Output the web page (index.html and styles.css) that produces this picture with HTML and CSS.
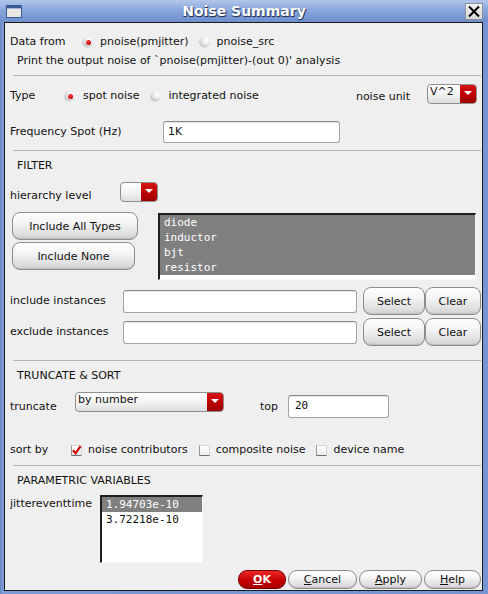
FILE: index.html
```html
<!DOCTYPE html>
<html>
<head>
<meta charset="utf-8">
<title>Noise Summary</title>
<link rel="stylesheet" href="styles.css">
</head>
<body>
<div class="win">
  <div class="titlebar">
    <svg class="winicon" width="16" height="13" viewBox="0 0 16 13"><rect x="0.5" y="0.5" width="15" height="12" fill="#e9e9e1" stroke="#3b5a93"/><rect x="0" y="0" width="16" height="3" fill="#3b5a93"/><rect x="1" y="3" width="14" height="1" fill="#9fb4d9"/></svg>
    <span class="title">Noise Summary</span>
    <span class="closebtn"><svg width="14" height="13" viewBox="0 0 14 13"><path d="M2 1.5 L12 11.5 M12 1.5 L2 11.5" stroke="#000" stroke-width="2"/></svg></span>
  </div>
  <div class="content">
    <section class="sec s1">
      <div class="row r-data">
        <span class="lbl w-data">Data from</span>
        <span class="radio on"></span><span class="opt">pnoise(pmjitter)</span>
        <span class="radio"></span><span class="opt">pnoise_src</span>
      </div>
      <div class="note">Print the output noise of `pnoise(pmjitter)-(out 0)' analysis</div>
    </section>
    <hr class="sep">
    <section class="sec s2">
      <div class="row r-type">
        <span class="lbl w-type mt5">Type</span>
        <span class="radio on mt7"></span><span class="opt mt5">spot noise</span>
        <span class="radio mt7"></span><span class="opt mt5">integrated noise</span>
        <span class="lbl unit mt6">noise unit</span>
        <span class="combo c-unit"><span class="val">V^2</span><span class="arrow"></span></span>
      </div>
      <div class="row r-freq">
        <span class="lbl w-freq">Frequency Spot (Hz)</span>
        <span class="input i-freq">1K</span>
      </div>
    </section>
    <hr class="sep">
    <section class="sec s3">
      <div class="head">FILTER</div>
      <div class="row r-hier">
        <span class="lbl w-hier mt7">hierarchy level</span>
        <span class="combo c-hier"><span class="val"></span><span class="arrow"></span></span>
      </div>
      <div class="r-body">
        <div class="btncol">
          <span class="btn b-all">Include All Types</span>
          <span class="btn b-none">Include None</span>
        </div>
        <div class="list l-types">
          <div class="item sel">diode</div>
          <div class="item sel">inductor</div>
          <div class="item sel">bjt</div>
          <div class="item sel">resistor</div>
        </div>
      </div>
      <div class="row r-inst">
        <span class="lbl w-inst">include instances</span>
        <span class="input i-inst"></span>
        <span class="btn b-sel">Select</span>
        <span class="btn b-clr">Clear</span>
      </div>
      <div class="row r-inst r-excl">
        <span class="lbl w-inst">exclude instances</span>
        <span class="input i-inst"></span>
        <span class="btn b-sel">Select</span>
        <span class="btn b-clr">Clear</span>
      </div>
    </section>
    <hr class="sep">
    <section class="sec s4">
      <div class="head">TRUNCATE &amp; SORT</div>
      <div class="row r-trunc">
        <span class="lbl w-trunc mt8">truncate</span>
        <span class="combo c-trunc"><span class="val">by number</span><span class="arrow"></span></span>
        <span class="lbl w-top mt8">top</span>
        <span class="input i-top mono">20</span>
      </div>
      <div class="row r-sort">
        <span class="lbl w-sort">sort by</span>
        <span class="check on"><svg width="11" height="11" viewBox="0 0 11 11"><path d="M2 5.2 L4.6 8.3 L9.6 1.2" fill="none" stroke="#d40000" stroke-width="2.2"/></svg></span><span class="opt">noise contributors</span>
        <span class="check"></span><span class="opt">composite noise</span>
        <span class="check"></span><span class="opt">device name</span>
      </div>
    </section>
    <hr class="sep">
    <section class="sec s5">
      <div class="head">PARAMETRIC VARIABLES</div>
      <div class="row r-param">
        <span class="lbl w-param mt2">jittereventtime</span>
        <div class="list l-param">
          <div class="item sel">1.94703e-10</div>
          <div class="item">3.72218e-10</div>
        </div>
      </div>
      <div class="r-actions">
        <span class="btn act ok"><u>O</u>K</span>
        <span class="btn act cancel"><u>C</u>ancel</span>
        <span class="btn act apply"><u>A</u>pply</span>
        <span class="btn act help"><u>H</u>elp</span>
      </div>
    </section>
  </div>
</div>
</body>
</html>
```

FILE: styles.css
```css
* { box-sizing: border-box; }
html, body { margin: 0; padding: 0; }
body {
  width: 488px;
  height: 594px;
  overflow: hidden;
  font-family: "DejaVu Sans", sans-serif;
  font-size: 11px;
  color: #111;
}
.win {
  width: 488px;
  height: 594px;
  display: flex;
  flex-direction: column;
  background: linear-gradient(to right, #5f82c4, #7c9ad4 2px, #7596d2);
}
.titlebar {
  height: 22px;
  flex: none;
  display: flex;
  align-items: center;
  position: relative;
  background: linear-gradient(to bottom, #b1c6ea, #8aa7dc 45%, #6d8fce);
}
.winicon { margin-left: 6px; margin-top: 1px; }
.title {
  position: absolute;
  left: 0;
  right: 0;
  top: 3px;
  text-align: center;
  font-weight: bold;
  font-size: 14px;
  line-height: 16px;
  color: #fff;
  text-shadow: 1px 1px 0 #28375a, 0 1px 1px #28375a;
}
.closebtn {
  margin-left: auto;
  margin-right: 5px;
  margin-top: 1px;
  width: 18px;
  height: 17px;
  border: 1px solid #8b8f98;
  background: linear-gradient(#f2f2f2, #d6d6d6);
  display: flex;
  align-items: center;
  justify-content: center;
  position: relative;
  z-index: 1;
}
.content {
  margin-left: 4px;
  width: 479px;
  height: 569px;
  border: 1px solid #1b1b1b;
  background: #efefef;
  display: flex;
  flex-direction: column;
  padding-left: 5px;
}
.sep {
  margin: 0 1px 0 3px;
  border: 0;
  height: 1px;
  background: #b4b4b4;
  flex: none;
}
.sec { flex: none; display: flex; flex-direction: column; }
.s1 { height: 52px; padding-top: 12px; }
.s2 { height: 74px; padding-top: 8px; }
.s3 { height: 209px; padding-top: 8px; }
.s4 { height: 104px; padding-top: 8px; }
.s5 { height: 124px; padding-top: 8px; }

.row { display: flex; align-items: center; }
.lbl, .opt, .head, .note { line-height: 14px; white-space: nowrap; flex: none; }
.mt2 { margin-top: 2px; }
.mt5 { margin-top: 5px; }
.mt6 { margin-top: 6px; }
.mt7 { margin-top: 7px; }
.mt8 { margin-top: 8px; }

.head { margin-left: 7px; height: 14px; }
.note { margin-left: 7px; margin-top: 5px; }

.r-data { height: 14px; }
.w-data { width: 73px; }
.radio {
  flex: none;
  width: 10px;
  height: 10px;
  border-radius: 50%;
  background: radial-gradient(circle at 62% 32%, #ffffff 0, #f3f3f3 30%, #c4c4c4 85%, #b4b4b4 100%);
  box-shadow: -0.5px 0.5px 0 #a9a9a9;
  margin-right: 7px;
  position: relative;
}
.radio.on::after {
  content: "";
  position: absolute;
  left: 2.5px;
  top: 2.5px;
  width: 5px;
  height: 5px;
  border-radius: 50%;
  background: radial-gradient(circle at 35% 35%, #ff4a4a, #c80000 70%);
}
.opt { margin-right: 11px; }

.r-type { align-items: flex-start; height: 20px; }
.w-type { width: 55px; }
.r-type .radio { margin-right: 8px; }
.unit { margin-left: auto; margin-right: 17px; }
.combo {
  flex: none;
  display: flex;
  height: 20px;
  border: 1px solid #8e8e8e;
  border-radius: 4px;
  overflow: hidden;
  background: linear-gradient(#ffffff, #f3f3f3 50%, #dedede);
}
.combo .val { flex: 1; padding-left: 2px; line-height: 13px; }
.combo .arrow {
  width: 16px;
  flex: none;
  background: linear-gradient(#d71414, #b80000 60%, #9c0000);
  position: relative;
}
.combo .arrow::after {
  content: "";
  position: absolute;
  left: 4px;
  top: 6px;
  border-left: 4px solid transparent;
  border-right: 4px solid transparent;
  border-top: 4px solid #fff;
}
.c-unit { width: 50px; margin-right: 5px; }

.r-freq { margin-top: 17px; height: 22px; }
.w-freq { width: 153px; }
.input {
  flex: none;
  background: #fff;
  border: 1px solid #a2a2a2;
  border-top-color: #8a8a8a;
  border-radius: 3px;
  padding-left: 4px;
  line-height: 20px;
  box-shadow: inset 0 1px 0 #e6e6e6;
}
.i-freq { width: 177px; height: 22px; }

.r-hier { margin-top: 9px; height: 20px; align-items: flex-start; }
.w-hier { width: 110px; }
.c-hier { width: 38px; }

.r-body { display: flex; margin-top: 10px; height: 68px; }
.btncol { display: flex; flex-direction: column; margin-left: 2px; width: 126px; gap: 2px; }
.btn {
  flex: none;
  display: flex;
  align-items: center;
  justify-content: center;
  border: 1px solid #8d8d8d;
  border-radius: 8px;
  background: linear-gradient(#fefefe, #f4f4f4 40%, #dcdcdc 85%, #cdcdcd);
  box-shadow: inset 0 -1px 0 #c0c0c0;
  color: #111;
  white-space: nowrap;
}
.b-all { width: 126px; height: 28px; }
.b-none { width: 123px; height: 28px; }
.list {
  flex: none;
  background: #fff;
  border-top: 2px solid #1e1e1e;
  border-left: 2px solid #1e1e1e;
  border-right: 1px solid #f8f8f8;
  border-bottom: 1px solid #f8f8f8;
  font-family: "DejaVu Sans Mono", monospace;
  font-size: 11px;
}
.item { height: 15px; line-height: 15px; padding-left: 4px; white-space: nowrap; }
.item.sel { background: #808080; color: #fff; }
.l-types { margin-left: 20px; margin-top: 1px; width: 318px; height: 67px; }

.r-inst { margin-top: 7px; height: 28px; }
.r-excl { margin-top: 3px; }
.w-inst { width: 113px; }
.i-inst { width: 234px; height: 23px; }
.b-sel { width: 62px; height: 28px; margin-left: 6px; }
.b-clr { width: 56px; height: 28px; }

.r-trunc { margin-top: 9px; height: 26px; align-items: flex-start; }
.w-trunc { width: 65px; }
.c-trunc { width: 149px; }
.w-top { width: 28px; margin-left: 36px; }
.i-top { width: 101px; height: 23px; margin-top: 3px; }
.mono { font-family: "DejaVu Sans Mono", monospace; padding-left: 6px; }

.r-sort { margin-top: 25px; height: 14px; }
.w-sort { width: 61px; }
.check {
  flex: none;
  width: 11px;
  height: 11px;
  margin-right: 6px;
  background: linear-gradient(#ffffff, #ececec);
  border: 1px solid #d6d6d6;
  border-bottom-color: #6f6f6f;
  border-left-color: #9a9a9a;
  display: flex;
  align-items: center;
  justify-content: center;
}
.check svg { margin: -1px; }

.r-param { margin-top: 7px; align-items: flex-start; height: 68px; }
.w-param { width: 90px; }
.l-param { width: 103px; height: 68px; }
.l-param .item { height: 15px; }

.r-actions { display: flex; justify-content: flex-end; gap: 2px; margin-top: 7px; padding-right: 1px; }
.act { height: 19px; border-radius: 9px; }
.act u { text-decoration: underline; }
.ok {
  width: 48px;
  background: linear-gradient(#ec2a2a, #c40000 55%, #a80000);
  border-color: #760000;
  box-shadow: none;
  color: #fff;
  font-weight: bold;
}
.cancel { width: 69px; }
.apply { width: 63px; }
.help { width: 57px; }
```
